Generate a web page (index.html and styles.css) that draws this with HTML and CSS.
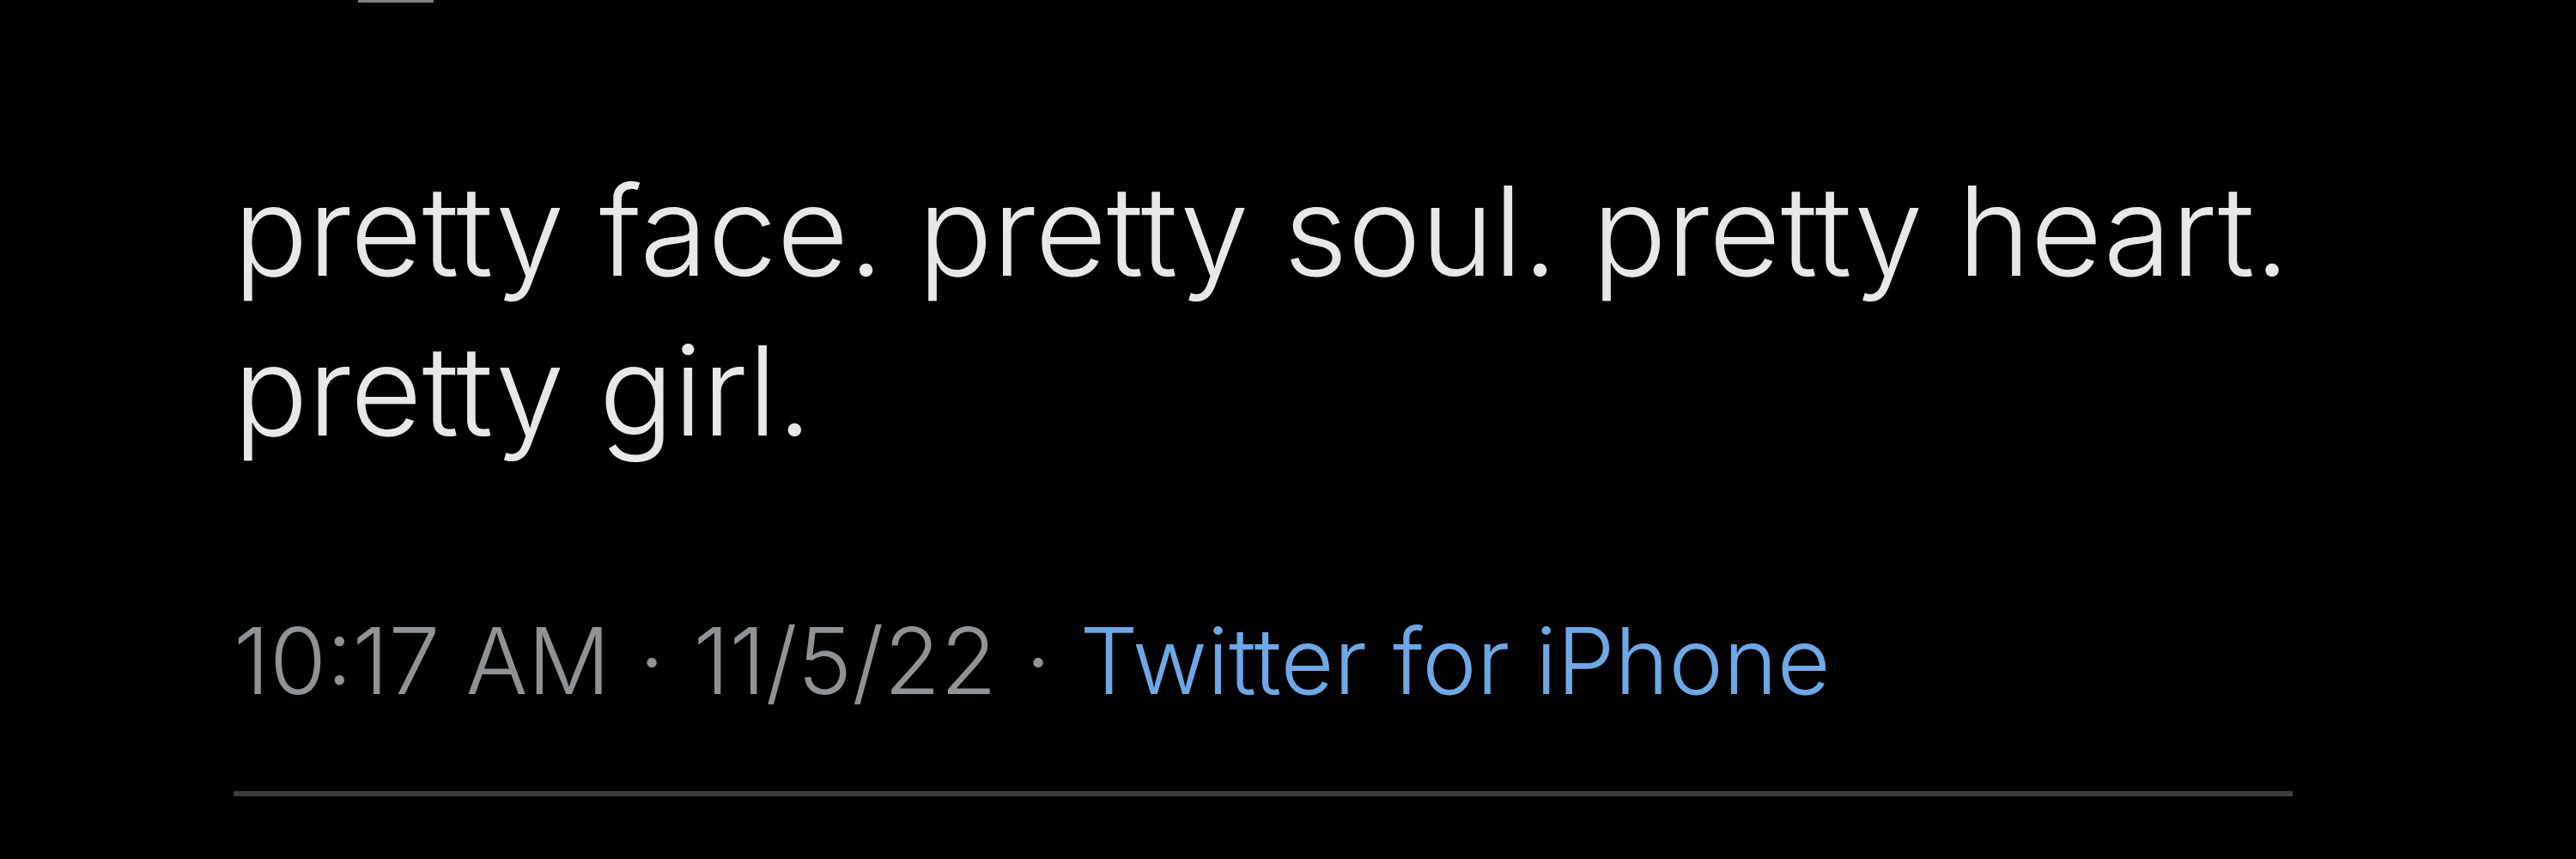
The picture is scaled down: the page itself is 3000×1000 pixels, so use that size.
FILE: index.html
```html
<!DOCTYPE html>
<html lang="en">
<head>
<meta charset="utf-8">
<title>Tweet</title>
<link rel="stylesheet" href="styles.css">
</head>
<body>
<main class="tweet">
  <div class="header"><span class="header-cut"></span></div>
  <p class="tweet-text">pretty face. pretty soul. pretty heart. pretty girl.</p>
  <div class="meta">
    <span class="time">10:17 AM</span>
    <span class="sep">·</span>
    <span class="date">11/5/22</span>
    <span class="sep">·</span>
    <span class="source">Twitter for iPhone</span>
  </div>
  <div class="divider"></div>
</main>
</body>
</html>
```
FILE: styles.css
```css
html, body {
  margin: 0;
  padding: 0;
  background: #000;
}
body {
  width: 3000px;
  height: 1000px;
  overflow: hidden;
  font-family: "Inter", "Liberation Sans", Arial, sans-serif;
}
.tweet {
  display: flex;
  flex-direction: column;
  padding-left: 272px;
  width: 2398px;
}
.header {
  height: 3px;
  display: flex;
}
.header-cut {
  display: block;
  margin-left: 145px;
  width: 88px;
  height: 3px;
  background: #7f817a;
}
.tweet-text {
  margin: 173px 0 0 0;
  font-size: 144px;
  font-weight: 300;
  line-height: 186px;
  color: #e6e8e9;
}
.meta {
  margin-top: 160px;
  font-size: 107px;
  font-weight: 300;
  line-height: 123px;
  color: #8f9396;
  white-space: nowrap;
  display: flex;
  gap: 0.31em;
}
.source {
  color: #6ea8e6;
}
.divider {
  margin-top: 90px;
  height: 6px;
  background: #3d3f41;
}
```
